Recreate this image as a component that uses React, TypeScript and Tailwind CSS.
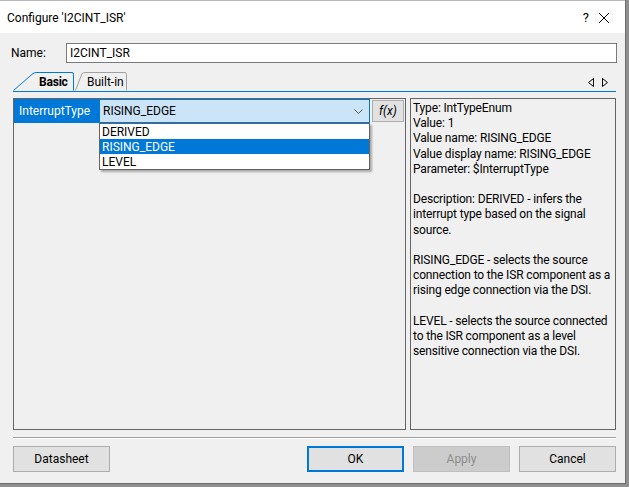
import React from "react";

const font = { fontFamily: "Roboto, 'Noto Sans', sans-serif" };

const infoLines = [
  "Type: IntTypeEnum",
  "Value: 1",
  "Value name: RISING_EDGE",
  "Value display name: RISING_EDGE",
  "Parameter: $InterruptType",
  "",
  "Description: DERIVED - infers the",
  "interrupt type based on the signal",
  "source.",
  "",
  "RISING_EDGE - selects the source",
  "connection to the ISR component as a",
  "rising edge connection via the DSI.",
  "",
  "LEVEL - selects the source connected",
  "to the ISR component as a level",
  "sensitive connection via the DSI.",
];

const options = ["DERIVED", "RISING_EDGE", "LEVEL"];

function Tab({ label, active, width, slant }: { label: string; active?: boolean; width: number; slant: number }) {
  const w = width - 1;
  const d = `M0.5 18.5 L${slant} 1.5 Q${slant + 1.5} 0.5 ${slant + 4} 0.5 L${w - 2} 0.5 Q${w - 0.5} 0.5 ${w - 0.5} 2.5 L${w - 0.5} 18.5`;
  return (
    <div className="relative h-[19px]" style={{ width }}>
      <svg className="absolute inset-0" width={width} height={19}>
        <path d={d} fill="#f0f0f0" stroke={active ? "#0078d7" : "#a0a0a0"} strokeWidth="1" />
      </svg>
      <span
        className={`absolute top-[2px] text-[12px] leading-[16px] text-black ${active ? "font-bold tracking-[-0.2px]" : ""}`}
        style={{ left: active ? 26 : 12 }}
      >
        {label}
      </span>
    </div>
  );
}

function Button({ label, kind }: { label: string; kind?: "default" | "disabled" }) {
  const cls =
    kind === "default"
      ? "border-2 border-[#0078d7] bg-[#e1e1e1] text-black"
      : kind === "disabled"
        ? "border border-[#bfbfbf] bg-[#cccccc] text-[#8c8c8c]"
        : "border border-[#adadad] bg-[#e1e1e1] text-black";
  return (
    <div className={`flex h-[26px] w-[97px] items-center justify-center text-[12px] ${cls}`}>{label}</div>
  );
}

export default function App() {
  return (
    <div className="h-[487px] w-[629px] overflow-hidden bg-[#8f8f8f]" style={font}>
      <div className="flex h-[484px] w-[626px] flex-col border-r border-b border-[#6e6e6e] bg-[#f0f0f0]">
        {/* title bar */}
        <div className="flex h-[33px] items-center border-t border-[#b9b9b9] bg-white pl-[7px] pt-[2px] text-[12px] text-black">
          <span>Configure 'I2CINT_ISR'</span>
          <span className="ml-auto mr-[9px] text-[13px]">?</span>
          <svg width="12" height="12" viewBox="0 0 12 12" className="mr-[15px]">
            <path d="M1 1 L11 11 M11 1 L1 11" stroke="#000" strokeWidth="1" />
          </svg>
        </div>

        <div className="flex flex-col pl-[13px] pr-[9px]">
          {/* name */}
          <div className="mt-[10px] flex h-[20px] items-center">
            <span className="ml-[-2px] w-[55px] text-[12px] text-black">Name:</span>
            <div className="mr-[-1px] flex h-[20px] flex-1 items-center border border-[#7a7a7a] bg-white pl-[3px] text-[12px] text-black">
              I2CINT_ISR
            </div>
          </div>

          {/* tabs */}
          <div className="mt-[10px] flex h-[19px] items-end border-b border-[#0078d7]">
            <Tab label="Basic" active width={62} slant={20} />
            <Tab label="Built-in" width={53} slant={7} />
            <div className="mb-[4px] ml-auto mr-[8px] flex items-center gap-[8px]">
              <svg width="6" height="9" viewBox="0 0 6 9">
                <path d="M5.5 0.5 L0.5 4.5 L5.5 8.5 Z" fill="none" stroke="#000" strokeWidth="1" />
              </svg>
              <svg width="6" height="9" viewBox="0 0 6 9">
                <path d="M0.5 0.5 L5.5 4.5 L0.5 8.5 Z" fill="none" stroke="#000" strokeWidth="1" />
              </svg>
            </div>
          </div>

          {/* panels */}
          <div className="mt-[6px] flex h-[332px] gap-[4px]">
            <div className="relative w-[393px] border border-[#646464]">
              <div className="flex h-[24px] text-[12px]">
                <div className="flex w-[85px] items-center bg-[#0078d7] pl-[5px] text-white">InterruptType</div>
                <div className="flex w-[271px] items-center border border-[#0078d7] bg-[#cce4f7] pl-[3px] text-black">
                  <span>RISING_EDGE</span>
                  <svg width="9" height="5" viewBox="0 0 9 5" className="ml-auto mr-[6px]">
                    <path d="M0.5 0.5 L4.5 4.5 L8.5 0.5" fill="none" stroke="#555" strokeWidth="1" />
                  </svg>
                </div>
                <div className="ml-[2px] mt-[1px] flex h-[22px] w-[32px] items-center justify-center border border-[#adadad] bg-[#e1e1e1] italic text-black">
                  f(x)
                </div>
              </div>
              <div className="absolute left-[85px] top-[24px] w-[271px] border border-[#646464] bg-white shadow-[2px_2px_2px_rgba(0,0,0,0.3)]">
                {options.map((o) => (
                  <div
                    key={o}
                    className={`flex h-[15px] items-center pl-[2px] text-[12px] ${o === "RISING_EDGE" ? "bg-[#0078d7] text-white" : "text-black"}`}
                  >
                    {o}
                  </div>
                ))}
              </div>
            </div>
            <div className="flex-1 border border-[#646464] pl-[2px] pt-[2px] text-[12px] leading-[15.2px] tracking-[-0.15px] text-black">
              {infoLines.map((l, i) => (
                <div key={i} className="h-[15.2px] whitespace-nowrap">
                  {l}
                </div>
              ))}
            </div>
          </div>

          {/* separator */}
          <div className="mt-[7px] h-[2px] border-t border-b border-t-[#a0a0a0] border-b-white" />

          {/* buttons */}
          <div className="mt-[7px] flex">
            <div className="w-[98px]">
              <Button label="Datasheet" />
            </div>
            <div className="ml-auto flex gap-[9px]">
              <Button label="OK" kind="default" />
              <Button label="Apply" kind="disabled" />
              <Button label="Cancel" />
            </div>
          </div>
        </div>
      </div>
    </div>
  );
}
